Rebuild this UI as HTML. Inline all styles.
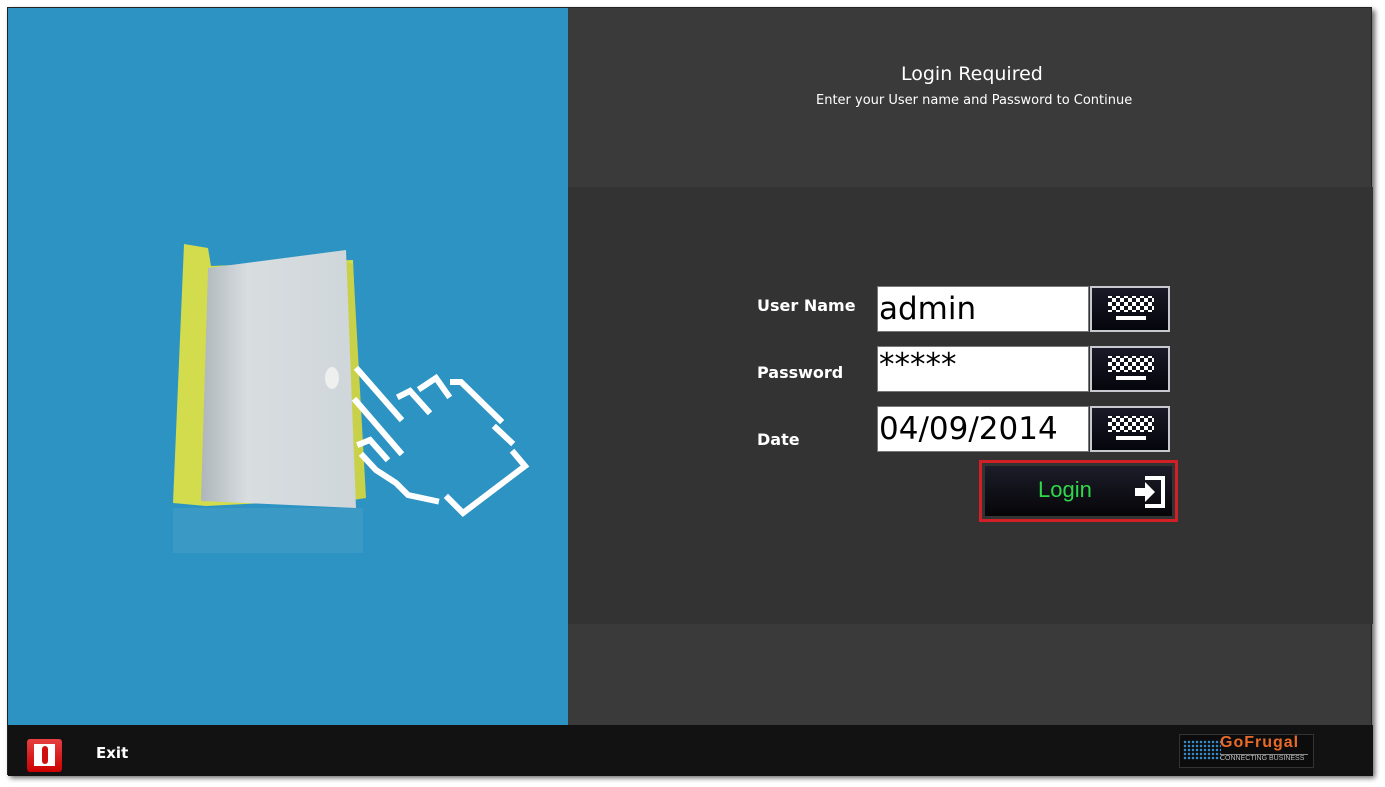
<!DOCTYPE html>
<html><head><style>
body{margin:0;width:1385px;height:787px;background:#fff;position:relative;overflow:hidden;font-family:"DejaVu Sans","Liberation Sans",sans-serif}
.win{position:absolute;left:7px;top:7px;width:1365px;height:768px;background:#3a3a3a;box-shadow:3px 3px 5px rgba(0,0,0,.6);border:1px solid #222;box-sizing:border-box}
.blue{position:absolute;left:0;top:0;width:560px;height:717px;background:#2c93c3}
.mid{position:absolute;left:560px;top:179px;width:805px;height:437px;background:#333}
.foot{position:absolute;left:0;top:717px;width:1365px;height:51px;background:#121212}
.t{position:absolute;color:#fff}
.lbl{position:absolute;color:#fff;font-weight:bold;font-size:16px;left:749px}
.inp{position:absolute;left:869px;width:212px;height:46px;background:#fff;border:1px solid #777;box-sizing:border-box;font-size:31px;color:#000;padding-left:1px;line-height:44px}
.kb{position:absolute;left:1082px;width:80px;height:46px;background:linear-gradient(#1a1a28,#05050c);border:2px solid #c8c8d0;box-sizing:border-box}
</style></head><body>
<div class="win">
<div class="blue">
<svg width="560" height="717" style="position:absolute;left:0;top:0">
<defs><linearGradient id="d" x1="0" x2="1"><stop offset="0" stop-color="#aeb6bb"/><stop offset=".3" stop-color="#d8dde0"/><stop offset="1" stop-color="#cfd6d9"/></linearGradient></defs>
<polygon points="176,236 200,240 203,258 345,252 355,490 198,498 165,495" fill="#d2dc4c"/>
<polygon points="333,252 345,256 358,490 345,492" fill="#c9d148"/>
<polygon points="200,260 338,242 348,500 193,493" fill="url(#d)"/>
<ellipse cx="324" cy="370" rx="7" ry="11" fill="#eef0f0"/>
<rect x="165" y="500" width="190" height="45" fill="#4aa0c8" opacity=".5"/>
<g stroke="#fff" stroke-width="6" fill="none" stroke-linecap="square">
<path d="M350,362 L392,410"/>
<path d="M392,388 L402,383 L420,403"/>
<path d="M413,380 L428,370 L440,387"/>
<path d="M445,374 L453,374 L492,412"/>
<path d="M488,420 L503,434"/>
<path d="M506,445 L517,458 L455,505 L440,490"/>
<path d="M348,393 L392,444"/>
<path d="M352,436 L362,432 L378,450"/>
<path d="M355,448 L368,462 L388,475 L400,487 L428,493"/>
</g>
</svg>
</div>
<div class="mid"></div>
<div class="t" style="left:893px;top:55px;font-size:19px">Login Required</div>
<div class="t" style="left:808px;top:85px;font-size:13px">Enter your User name and Password to Continue</div>
<div class="lbl" style="top:288px">User Name</div>
<div class="lbl" style="top:355px">Password</div>
<div class="lbl" style="top:422px">Date</div>
<div class="inp" style="top:278px">admin</div>
<div class="inp" style="top:338px;line-height:36px">*****</div>
<div class="inp" style="top:398px">04/09/2014</div>
<div class="kb" style="top:278px"></div><div class="kb" style="top:338px"></div><div class="kb" style="top:398px"></div>
<svg style="position:absolute;left:1082px;top:278px" width="80" height="170">
<defs><pattern id="c" width="8" height="8" patternUnits="userSpaceOnUse" x="18" y="0"><rect width="4" height="4" fill="#fff"/><rect x="4" y="4" width="4" height="4" fill="#fff"/></pattern></defs>
<g fill="#fff">
<g id="k"><rect x="18" y="10" width="46" height="16" fill="url(#c)"/><rect x="26" y="30" width="30" height="4"/></g>
<use href="#k" y="60"/><use href="#k" y="120"/>
</g></svg>
<div style="position:absolute;left:971px;top:452px;width:199px;height:62px;border:3px solid #d01f25;box-sizing:border-box;background:#333">
<div style="position:absolute;left:3px;top:3px;right:3px;bottom:3px;background:linear-gradient(#1d1d2a,#050508)">
<div style="position:absolute;left:53px;top:11px;color:#2fd84a;font-family:'Liberation Sans',sans-serif;font-size:22px">Login</div>
<svg style="position:absolute;left:148px;top:10px" width="34" height="32"><path d="M12,2 H30 V30 H12" stroke="#fff" stroke-width="4" fill="none"/><path d="M2,12 H12 V6 L22,16 L12,26 V20 H2Z" fill="#fff"/></svg>
</div></div>
<div class="foot">
<div style="position:absolute;left:19px;top:14px;width:35px;height:33px;background:linear-gradient(#e64040,#c00);border-radius:3px"><div style="position:absolute;left:7px;top:5px;width:21px;height:22px;background:#fff"></div><div style="position:absolute;left:15px;top:7px;width:6px;height:18px;background:#d01010;border-radius:3px"></div></div>
<div class="t" style="left:88px;top:19px;font-weight:bold;font-size:15px">Exit</div>
<div style="position:absolute;left:1171px;top:9px;width:133px;height:32px;background:#0c0c0c;border:1px solid #333">
<div style="position:absolute;left:3px;top:5px;width:38px;height:20px;background:radial-gradient(circle,#3a8ed0 1px,transparent 1.5px) 0 0/4px 4px"></div>
<div style="position:absolute;left:40px;top:-1px;color:#e86a2a;font-weight:bold;font-size:16px;letter-spacing:1px;font-family:'Liberation Sans',sans-serif">GoFrugal</div>
<div style="position:absolute;left:40px;top:19px;width:88px;color:#bbb;font-size:7px;font-family:'Liberation Sans',sans-serif;border-top:1px solid #888">CONNECTING BUSINESS</div>
</div></div>
</div>
</body></html>
